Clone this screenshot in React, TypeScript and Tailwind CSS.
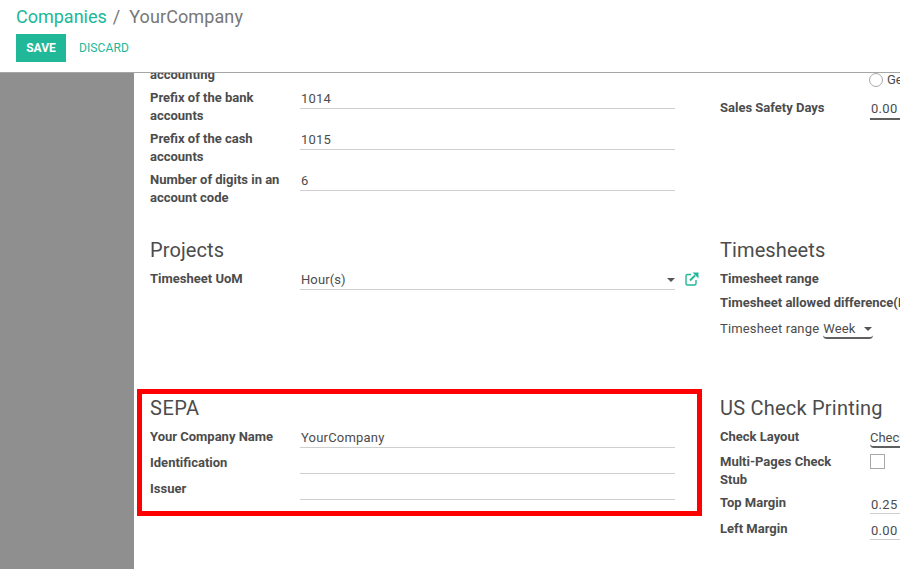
import type { ReactNode } from "react";

const font = "font-['Roboto',sans-serif]";

function Row({ label, value, tall }: { label: string; value?: string; tall?: boolean }) {
  return (
    <div className={`flex ${tall ? "h-[41px]" : "h-[26px]"}`}>
      <div className="w-[150px] pr-[9px] text-[13px] leading-[18px] font-bold text-[#4c4c4c]">{label}</div>
      <div className="w-[375px] h-[20px] pl-px border-b border-[#cfcfcf] text-[13px] leading-[20px] text-[#4c4c4c] tracking-[0.2px]">
        {value}
      </div>
    </div>
  );
}

function RightRow({ label, children, className }: { label: string; children?: ReactNode; className: string }) {
  return (
    <div className={`flex ${className}`}>
      <div className="w-[150px] shrink-0 pr-[10px] text-[13px] leading-[18px] font-bold text-[#4c4c4c]">{label}</div>
      {children}
    </div>
  );
}

function SmallField({ value }: { value: string }) {
  return (
    <div className="w-[60px] h-[20px] border-b border-[#cfcfcf] pl-px text-[13px] leading-[21px] text-[#4c4c4c] tracking-[0.3px]">
      {value}
    </div>
  );
}

function ExternalIcon() {
  return (
    <svg width="14" height="14" viewBox="0 0 14 14" className="ml-[10px] mt-[2px] text-[#21b799]">
      <path
        d="M6 2.5H2.5A1.5 1.5 0 0 0 1 4v7.5A1.5 1.5 0 0 0 2.5 13H9.5A1.5 1.5 0 0 0 11 11.5V8"
        fill="none"
        stroke="currentColor"
        strokeWidth="1.4"
      />
      <path d="M5 8.5L10 3.5" fill="none" stroke="currentColor" strokeWidth="2" />
      <path d="M7.5 0.5H13.5V6.5Z" fill="currentColor" />
    </svg>
  );
}

export default function App() {
  return (
    <div className={`${font} w-[900px] h-[569px] overflow-hidden bg-white flex flex-col`}>
      <header className="h-[73px] shrink-0 border-b border-[#a6a6a6] pl-[16px] pt-[6px]">
        <div className="flex h-[22px] items-center text-[18px] leading-[22px]">
          <span className="text-[#21b799]">Companies</span>
          <span className="text-[#777777] ml-[6px]">/</span>
          <span className="text-[#777777] ml-[9px] tracking-[0.1px]">YourCompany</span>
        </div>
        <div className="flex items-center mt-[6px]">
          <button className="h-[28px] w-[50px] bg-[#21b799] text-white text-[12px] font-bold">SAVE</button>
          <button className="ml-[13px] text-[#21b799] text-[12px] tracking-[0.1px]">DISCARD</button>
        </div>
      </header>
      <div className="flex flex-1 min-h-0">
        <aside className="w-[134px] shrink-0 bg-[#8f8f8f]" />
        <main className="flex-1 overflow-hidden pl-[16px]">
          {/* scrolled: first label is cut off by the header */}
          <div className="grid grid-cols-[570px_1fr] -mt-[7px]">
            <div className="h-[162px]">
              <div className="h-[23px] text-[13px] leading-[18px] font-bold text-[#4c4c4c]">accounting</div>
              <Row label="Prefix of the bank accounts" value="1014" tall />
              <Row label="Prefix of the cash accounts" value="1015" tall />
              <Row label="Number of digits in an account code" value="6" tall />
            </div>
            <div className="h-[162px] w-[300px]">
              <div className="h-[33px] flex pl-[149px] pt-[6px]">
                <span className="w-[14px] h-[14px] mt-[1px] rounded-full border border-[#a8a8a8] shrink-0" />
                <span className="ml-[4px] text-[13px] leading-[16px] text-[#4c4c4c]">Gen</span>
              </div>
              <RightRow label="Sales Safety Days" className="h-[26px]">
                <div className="w-[60px] h-[22px] border-b-2 border-[#5f5f5f] pl-px -mt-[1px] text-[13px] leading-[22px] text-[#4c4c4c] tracking-[0.3px]">
                  0.00
                </div>
              </RightRow>
            </div>

            <div className="h-[165px] pt-[8px]">
              <h2 className="h-[34px] text-[20px] leading-[28px] text-[#4c4c4c] tracking-[0.1px]">Projects</h2>
              <div className="flex">
                <div className="w-[150px] text-[13px] leading-[18px] font-bold text-[#4c4c4c]">Timesheet UoM</div>
                <div className="w-[375px] h-[20px] pl-px border-b border-[#cfcfcf] flex justify-between text-[13px] leading-[20px] text-[#4c4c4c] tracking-[0.1px]">
                  Hour(s)
                  <span className="mt-[8px] w-0 h-0 border-x-[4px] border-x-transparent border-t-[4px] border-t-[#555555]" />
                </div>
                <ExternalIcon />
              </div>
            </div>
            <div className="h-[165px] pt-[8px] w-[300px] overflow-hidden">
              <h2 className="h-[34px] text-[20px] leading-[28px] text-[#4c4c4c] tracking-[0.1px]">Timesheets</h2>
              <div className="h-[24px] text-[13px] leading-[18px] font-bold text-[#4c4c4c]">Timesheet range</div>
              <div className="h-[26px] text-[13px] leading-[18px] font-bold text-[#4c4c4c] whitespace-nowrap">
                Timesheet allowed difference(Hours)
              </div>
              <div className="flex text-[13px] leading-[18px] text-[#4c4c4c] tracking-[0.15px] whitespace-nowrap">
                Timesheet range
                <span className="ml-[4px] w-[50px] h-[19px] border-b-2 border-[#5f5f5f] rounded-b-[4px] flex justify-between pr-[1px]">
                  Week
                  <span className="mt-[7px] w-0 h-0 border-x-[4px] border-x-transparent border-t-[4px] border-t-[#555555]" />
                </span>
              </div>
            </div>

            <section className="relative h-[160px]">
              <div className="absolute left-[-13px] top-[-4px] w-[565px] h-[127px] border-[5px] border-[#ff0000]" />
              <h2 className="pt-[2px] h-[35px] text-[20px] leading-[26px] text-[#4c4c4c] tracking-[0.5px]">SEPA</h2>
              <Row label="Your Company Name" value="YourCompany" />
              <Row label="Identification" />
              <Row label="Issuer" />
            </section>
            <section className="h-[160px] w-[300px] overflow-hidden">
              <h2 className="pt-[2px] h-[35px] text-[20px] leading-[26px] text-[#4c4c4c] tracking-[0.22px] whitespace-nowrap">
                US Check Printing
              </h2>
              <RightRow label="Check Layout" className="h-[25px]">
                <div className="w-[60px] h-[20px] border-b-2 border-[#5f5f5f] rounded-bl-[4px] text-[13px] leading-[20px] text-[#4c4c4c]">
                  Check
                </div>
              </RightRow>
              <RightRow label="Multi-Pages Check Stub" className="h-[41px]">
                <span className="w-[15px] h-[15px] mt-[1px] border border-[#a8a8a8]" />
              </RightRow>
              <RightRow label="Top Margin" className="h-[26px]">
                <SmallField value="0.25" />
              </RightRow>
              <RightRow label="Left Margin" className="h-[26px]">
                <SmallField value="0.00" />
              </RightRow>
            </section>
          </div>
        </main>
      </div>
    </div>
  );
}
